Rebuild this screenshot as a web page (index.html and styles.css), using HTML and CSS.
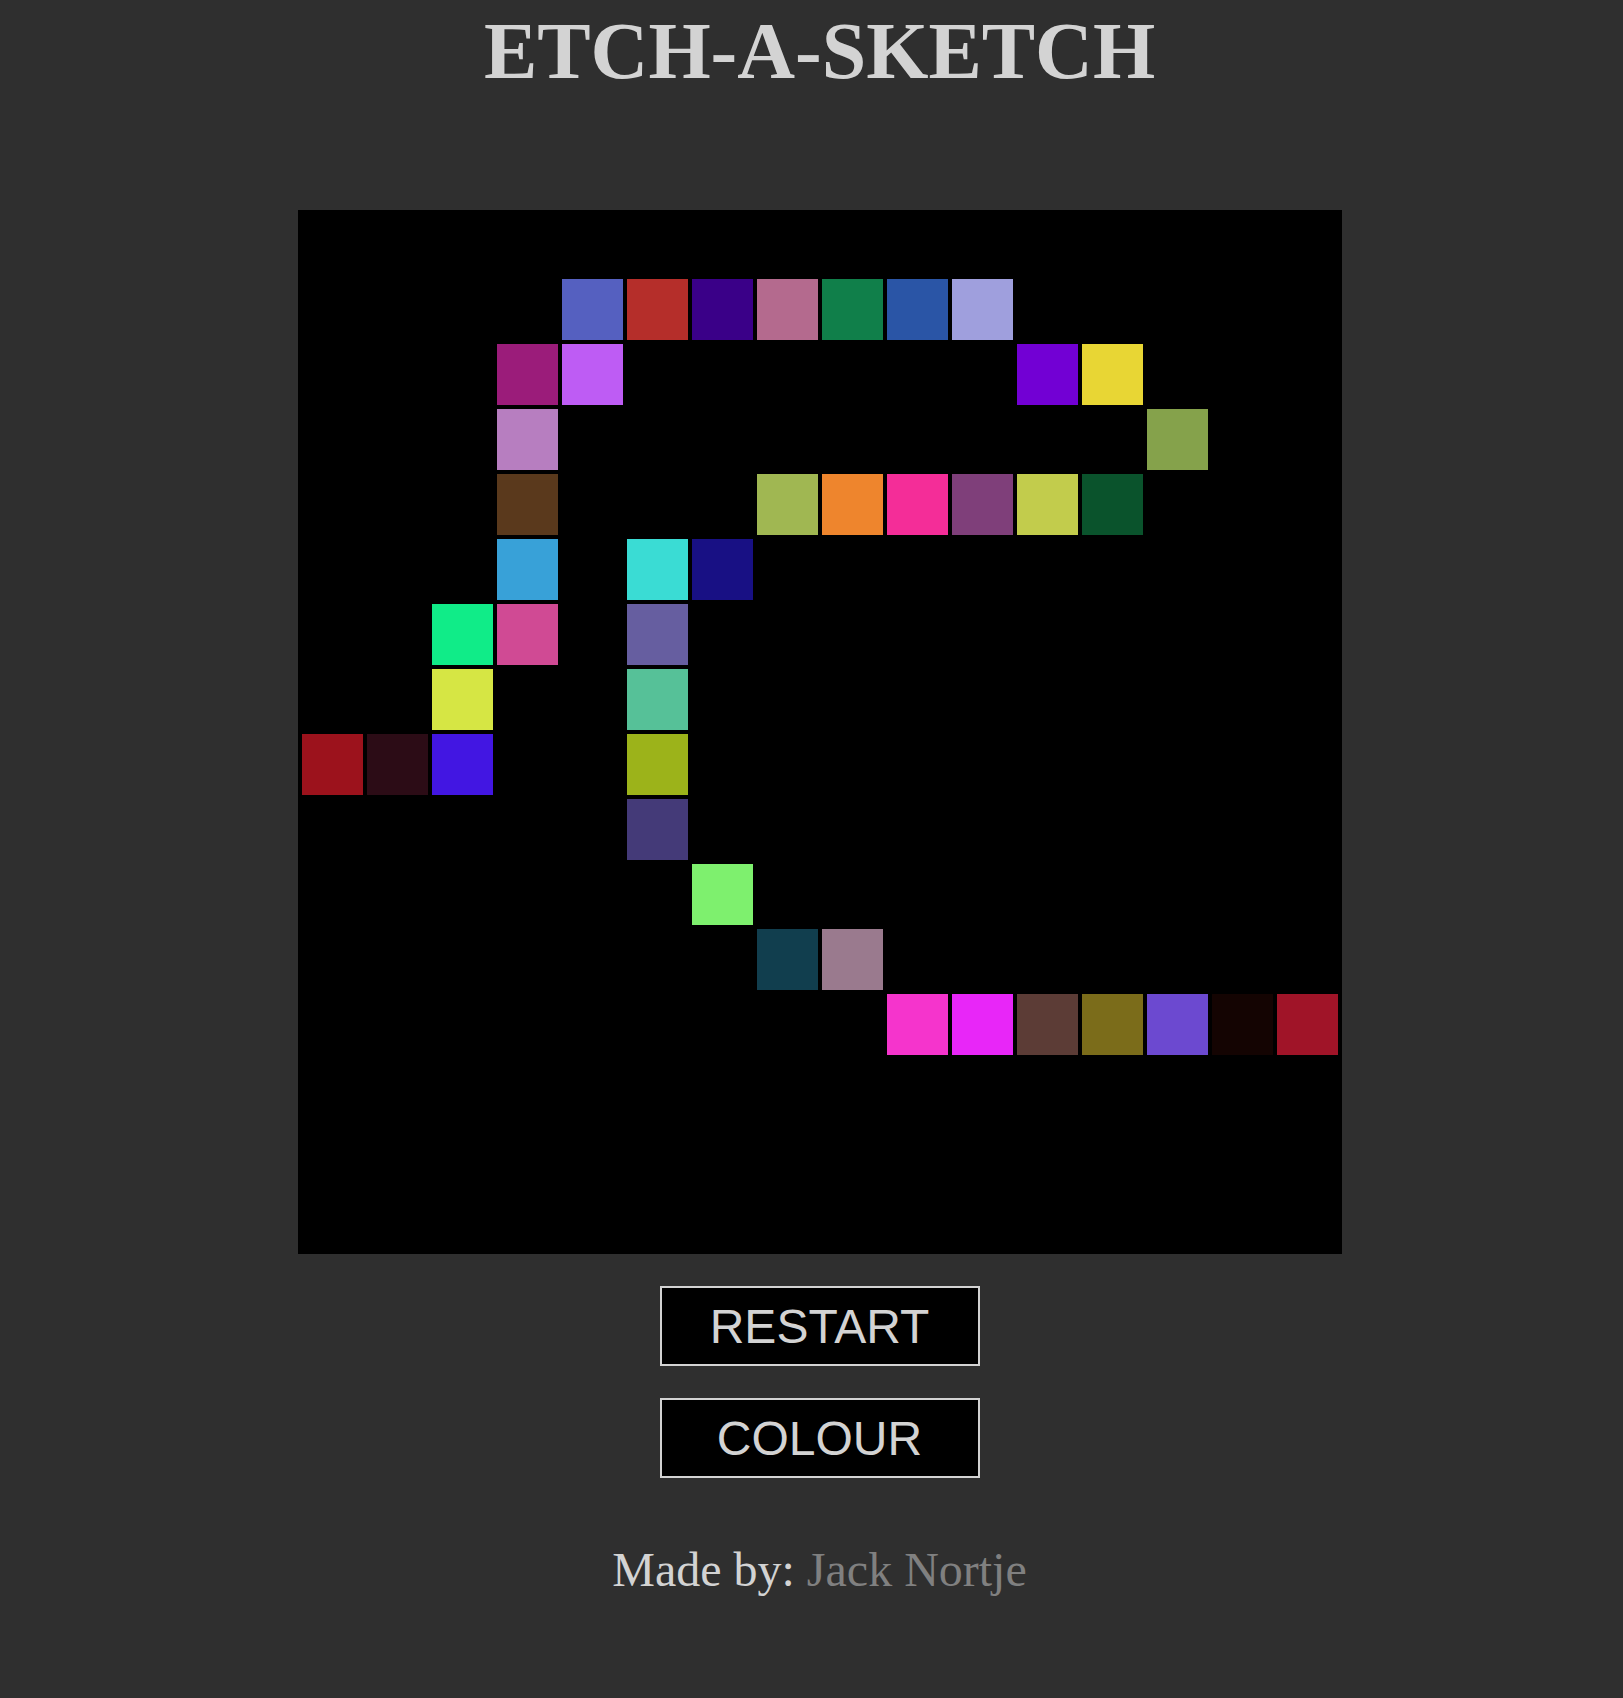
FILE: index.html
```html
<!DOCTYPE html>
<html lang="en">
<head>
<meta charset="utf-8">
<title>Etch-a-Sketch</title>
<link rel="stylesheet" href="styles.css">
</head>
<body>
<main class="page">
  <h1 class="title">ETCH-A-SKETCH</h1>
  <div class="grid">
    <div class="cell"></div><div class="cell"></div><div class="cell"></div><div class="cell"></div><div class="cell"></div><div class="cell"></div><div class="cell"></div><div class="cell"></div><div class="cell"></div><div class="cell"></div><div class="cell"></div><div class="cell"></div><div class="cell"></div><div class="cell"></div><div class="cell"></div><div class="cell"></div>
    <div class="cell"></div><div class="cell"></div><div class="cell"></div><div class="cell"></div><div class="cell" style="background-color:#5560c0"></div><div class="cell" style="background-color:#b52e2a"></div><div class="cell" style="background-color:#3a0088"></div><div class="cell" style="background-color:#b46a8e"></div><div class="cell" style="background-color:#107f4a"></div><div class="cell" style="background-color:#2a55a6"></div><div class="cell" style="background-color:#9f9fdd"></div><div class="cell"></div><div class="cell"></div><div class="cell"></div><div class="cell"></div><div class="cell"></div>
    <div class="cell"></div><div class="cell"></div><div class="cell"></div><div class="cell" style="background-color:#9b1c7a"></div><div class="cell" style="background-color:#be5cf4"></div><div class="cell"></div><div class="cell"></div><div class="cell"></div><div class="cell"></div><div class="cell"></div><div class="cell"></div><div class="cell" style="background-color:#7200d4"></div><div class="cell" style="background-color:#e8d634"></div><div class="cell"></div><div class="cell"></div><div class="cell"></div>
    <div class="cell"></div><div class="cell"></div><div class="cell"></div><div class="cell" style="background-color:#b77ec0"></div><div class="cell"></div><div class="cell"></div><div class="cell"></div><div class="cell"></div><div class="cell"></div><div class="cell"></div><div class="cell"></div><div class="cell"></div><div class="cell"></div><div class="cell" style="background-color:#85a24b"></div><div class="cell"></div><div class="cell"></div>
    <div class="cell"></div><div class="cell"></div><div class="cell"></div><div class="cell" style="background-color:#5a391c"></div><div class="cell"></div><div class="cell"></div><div class="cell"></div><div class="cell" style="background-color:#a0b752"></div><div class="cell" style="background-color:#ee852d"></div><div class="cell" style="background-color:#f42d98"></div><div class="cell" style="background-color:#7f3f7a"></div><div class="cell" style="background-color:#c2cc4c"></div><div class="cell" style="background-color:#0a532c"></div><div class="cell"></div><div class="cell"></div><div class="cell"></div>
    <div class="cell"></div><div class="cell"></div><div class="cell"></div><div class="cell" style="background-color:#38a1d8"></div><div class="cell"></div><div class="cell" style="background-color:#3adcd4"></div><div class="cell" style="background-color:#181084"></div><div class="cell"></div><div class="cell"></div><div class="cell"></div><div class="cell"></div><div class="cell"></div><div class="cell"></div><div class="cell"></div><div class="cell"></div><div class="cell"></div>
    <div class="cell"></div><div class="cell"></div><div class="cell" style="background-color:#10ec88"></div><div class="cell" style="background-color:#d04a94"></div><div class="cell"></div><div class="cell" style="background-color:#665ea0"></div><div class="cell"></div><div class="cell"></div><div class="cell"></div><div class="cell"></div><div class="cell"></div><div class="cell"></div><div class="cell"></div><div class="cell"></div><div class="cell"></div><div class="cell"></div>
    <div class="cell"></div><div class="cell"></div><div class="cell" style="background-color:#d6e644"></div><div class="cell"></div><div class="cell"></div><div class="cell" style="background-color:#56c198"></div><div class="cell"></div><div class="cell"></div><div class="cell"></div><div class="cell"></div><div class="cell"></div><div class="cell"></div><div class="cell"></div><div class="cell"></div><div class="cell"></div><div class="cell"></div>
    <div class="cell" style="background-color:#9c121c"></div><div class="cell" style="background-color:#2c0c16"></div><div class="cell" style="background-color:#4216e2"></div><div class="cell"></div><div class="cell"></div><div class="cell" style="background-color:#9cb31a"></div><div class="cell"></div><div class="cell"></div><div class="cell"></div><div class="cell"></div><div class="cell"></div><div class="cell"></div><div class="cell"></div><div class="cell"></div><div class="cell"></div><div class="cell"></div>
    <div class="cell"></div><div class="cell"></div><div class="cell"></div><div class="cell"></div><div class="cell"></div><div class="cell" style="background-color:#443a78"></div><div class="cell"></div><div class="cell"></div><div class="cell"></div><div class="cell"></div><div class="cell"></div><div class="cell"></div><div class="cell"></div><div class="cell"></div><div class="cell"></div><div class="cell"></div>
    <div class="cell"></div><div class="cell"></div><div class="cell"></div><div class="cell"></div><div class="cell"></div><div class="cell"></div><div class="cell" style="background-color:#7ef06e"></div><div class="cell"></div><div class="cell"></div><div class="cell"></div><div class="cell"></div><div class="cell"></div><div class="cell"></div><div class="cell"></div><div class="cell"></div><div class="cell"></div>
    <div class="cell"></div><div class="cell"></div><div class="cell"></div><div class="cell"></div><div class="cell"></div><div class="cell"></div><div class="cell"></div><div class="cell" style="background-color:#113e4e"></div><div class="cell" style="background-color:#9a7a8e"></div><div class="cell"></div><div class="cell"></div><div class="cell"></div><div class="cell"></div><div class="cell"></div><div class="cell"></div><div class="cell"></div>
    <div class="cell"></div><div class="cell"></div><div class="cell"></div><div class="cell"></div><div class="cell"></div><div class="cell"></div><div class="cell"></div><div class="cell"></div><div class="cell"></div><div class="cell" style="background-color:#f534cc"></div><div class="cell" style="background-color:#e826f8"></div><div class="cell" style="background-color:#5c3c36"></div><div class="cell" style="background-color:#7b6c1a"></div><div class="cell" style="background-color:#6c49d0"></div><div class="cell" style="background-color:#140402"></div><div class="cell" style="background-color:#a01428"></div>
    <div class="cell"></div><div class="cell"></div><div class="cell"></div><div class="cell"></div><div class="cell"></div><div class="cell"></div><div class="cell"></div><div class="cell"></div><div class="cell"></div><div class="cell"></div><div class="cell"></div><div class="cell"></div><div class="cell"></div><div class="cell"></div><div class="cell"></div><div class="cell"></div>
    <div class="cell"></div><div class="cell"></div><div class="cell"></div><div class="cell"></div><div class="cell"></div><div class="cell"></div><div class="cell"></div><div class="cell"></div><div class="cell"></div><div class="cell"></div><div class="cell"></div><div class="cell"></div><div class="cell"></div><div class="cell"></div><div class="cell"></div><div class="cell"></div>
    <div class="cell"></div><div class="cell"></div><div class="cell"></div><div class="cell"></div><div class="cell"></div><div class="cell"></div><div class="cell"></div><div class="cell"></div><div class="cell"></div><div class="cell"></div><div class="cell"></div><div class="cell"></div><div class="cell"></div><div class="cell"></div><div class="cell"></div><div class="cell"></div>
  </div>
  <div class="controls">
    <button class="btn" type="button">RESTART</button>
    <button class="btn" type="button">COLOUR</button>
  </div>
  <p class="credit">Made by: <a class="author" href="#">Jack Nortje</a></p>
</main>
</body>
</html>
```

FILE: styles.css
```css
html, body {
  margin: 0;
  padding: 0;
  background: #2f2f2f;
  overflow-x: hidden;
}

.page {
  display: flex;
  flex-direction: column;
  align-items: center;
  padding: 5px 0 0 16px;
  font-family: "Liberation Serif", "Times New Roman", serif;
  color: #d3d3d3;
}

.title {
  margin: 0;
  font-size: 80px;
  line-height: 92px;
  font-weight: bold;
  color: #d3d3d3;
}

.grid {
  margin-top: 113px;
  width: 1044px;
  height: 1044px;
  box-sizing: border-box;
  border: 2px solid #000;
  background: #000;
  display: grid;
  grid-template-columns: repeat(16, 65px);
  grid-template-rows: repeat(16, 65px);
}

.cell {
  box-sizing: border-box;
  border: 2px solid #000;
  background-color: #000;
}

.controls {
  margin-top: 32px;
  display: flex;
  flex-direction: column;
  align-items: center;
  gap: 32px;
}

.btn {
  width: 320px;
  height: 80px;
  box-sizing: border-box;
  border: 2px solid #d3d3d3;
  background: #000;
  color: #d3d3d3;
  font-family: "Liberation Sans", Arial, sans-serif;
  font-size: 48px;
  padding: 0;
  cursor: pointer;
}

.credit {
  margin: 64px 0 0;
  font-size: 48px;
  line-height: 55px;
  color: #d3d3d3;
}

.author {
  color: #808080;
  text-decoration: none;
}
```
